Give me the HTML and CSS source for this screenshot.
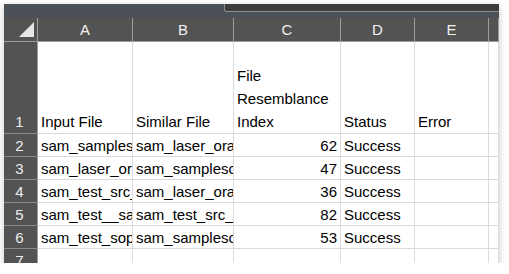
FILE: index.html
```html
<!DOCTYPE html>
<html lang="en">
<head>
    <meta charset="UTF-8">
    <title>Resemblance Report</title>
    <link rel="stylesheet" href="styles.css">
</head>
<body>
    <div class="sheet-window">
        <div class="title-strip">
            <div class="title-tab"></div>
        </div>

        <div class="sheet">
            <!-- column headers -->
            <div class="corner">
                <svg width="16" height="16" viewBox="0 0 16 16"><polygon points="15,0 15,15 0,15" fill="#e6e6e6"/></svg>
            </div>
            <div class="col-head">A</div>
            <div class="col-head">B</div>
            <div class="col-head">C</div>
            <div class="col-head">D</div>
            <div class="col-head">E</div>
            <div class="col-head"></div>

            <!-- row 1 -->
            <div class="row-head tall">1</div>
            <div class="cell tall">Input File</div>
            <div class="cell tall">Similar File</div>
            <div class="cell tall wrap">File Resemblance Index</div>
            <div class="cell tall">Status</div>
            <div class="cell tall">Error</div>
            <div class="cell tall"></div>

            <div class="row-head">2</div>
            <div class="cell">sam_samplescan.txt</div>
            <div class="cell">sam_laser_orange.txt</div>
            <div class="cell num">62</div>
            <div class="cell">Success</div>
            <div class="cell"></div>
            <div class="cell"></div>

            <div class="row-head">3</div>
            <div class="cell">sam_laser_orange.txt</div>
            <div class="cell">sam_samplescan.txt</div>
            <div class="cell num">47</div>
            <div class="cell">Success</div>
            <div class="cell"></div>
            <div class="cell"></div>

            <div class="row-head">4</div>
            <div class="cell">sam_test_src_main.txt</div>
            <div class="cell">sam_laser_orange.txt</div>
            <div class="cell num">36</div>
            <div class="cell">Success</div>
            <div class="cell"></div>
            <div class="cell"></div>

            <div class="row-head">5</div>
            <div class="cell">sam_test__sample.txt</div>
            <div class="cell">sam_test_src_main.txt</div>
            <div class="cell num">82</div>
            <div class="cell">Success</div>
            <div class="cell"></div>
            <div class="cell"></div>

            <div class="row-head">6</div>
            <div class="cell">sam_test_sop.txt</div>
            <div class="cell">sam_samplescan.txt</div>
            <div class="cell num">53</div>
            <div class="cell">Success</div>
            <div class="cell"></div>
            <div class="cell"></div>

            <div class="row-head">7</div>
            <div class="cell"></div>
            <div class="cell"></div>
            <div class="cell"></div>
            <div class="cell"></div>
            <div class="cell"></div>
            <div class="cell"></div>
        </div>
    </div>
</body>
</html>
```

FILE: styles.css
```css
* {
    margin: 0;
    padding: 0;
    box-sizing: border-box;
}

body {
    background-color: #ffffff;
    font-family: 'Liberation Sans', Arial, sans-serif;
    font-size: 15px;
    color: #000000;
}

.sheet-window {
    margin: 4px 0 0 4px;
    width: 495px;
    height: 259px;
    overflow: hidden;
    background-color: #ffffff;
    box-shadow: 0 2px 7px rgba(0, 0, 0, 0.22);
}

.title-strip {
    height: 14px;
    background-color: #4b5156;
    display: flex;
    justify-content: flex-end;
}

.title-tab {
    width: 275px;
    height: 8px;
    background-color: #3d3d3d;
    border-left: 1px solid #8f8f8f;
    border-bottom: 1px solid #8f8f8f;
    border-bottom-left-radius: 3px;
}

.sheet {
    display: grid;
    grid-template-columns: 34px 95px 101px 107px 74px 74px 10px;
    grid-template-rows: 24px 92px repeat(6, 23px);
}

.corner,
.col-head {
    background-color: #535353;
    border-right: 1px solid #9c9c9c;
    border-bottom: 1px solid #9c9c9c;
}

.corner {
    display: flex;
    align-items: flex-end;
    justify-content: flex-end;
    padding: 0 2px 3px 0;
}

.corner svg {
    display: block;
}

.col-head {
    color: #f0f0f0;
    text-align: center;
    line-height: 23px;
}

.row-head {
    background-color: #535353;
    color: #ededed;
    border-right: 1px solid #9c9c9c;
    border-bottom: 1px solid #8a8a8a;
    display: flex;
    align-items: flex-end;
    justify-content: center;
    padding: 0 2px 1px 0;
    line-height: 18px;
}

.cell {
    border-right: 1px solid #dadada;
    border-bottom: 1px solid #dadada;
    display: flex;
    align-items: flex-end;
    padding: 0 0 1px 3px;
    line-height: 18px;
    white-space: nowrap;
    overflow: hidden;
}

.tall {
    line-height: 23px;
    padding-bottom: 0;
}

.wrap {
    white-space: normal;
}

.num {
    justify-content: flex-end;
    padding-right: 3px;
}
```
